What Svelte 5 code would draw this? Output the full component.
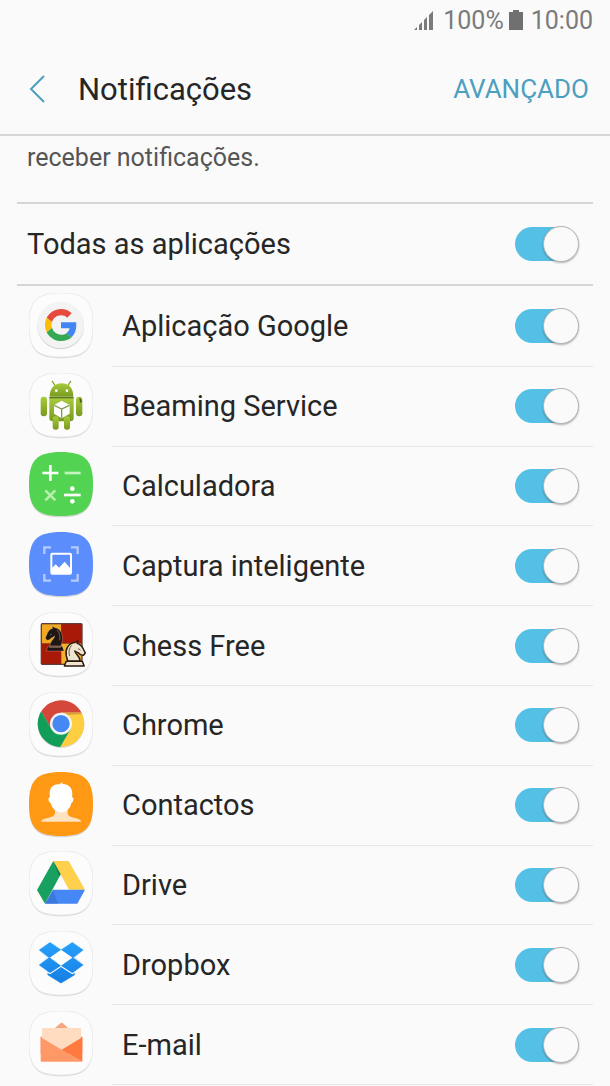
<script>
    let apps = [
        {id: "google", name: "Aplicação Google", on: true},
        {id: "beaming", name: "Beaming Service", on: true},
        {id: "calc", name: "Calculadora", on: true, color: "#52d452"},
        {id: "capture", name: "Captura inteligente", on: true, color: "#5c8dfd"},
        {id: "chess", name: "Chess Free", on: true},
        {id: "chrome", name: "Chrome", on: true},
        {id: "contacts", name: "Contactos", on: true, color: "#ff9914"},
        {id: "drive", name: "Drive", on: true},
        {id: "dropbox", name: "Dropbox", on: true},
        {id: "email", name: "E-mail", on: true}
    ]

    const tile = "M96 0C168 0 192 24 192 96S168 192 96 192 0 168 0 96 24 0 96 0z"
    const knight = "M23 7L21 0L30 5C47 8 55 24 52 44L48 60H15C14 46 27 41 29 30C23 35 18 35 14 41L6 43L1 36L5 27C8 18 13 10 23 7zM9 61H52L57 75H4z"

    $: all_on = apps.every(app => app.on)

    function toggle_all() {
        const value = !all_on
        apps = apps.map(app => ({...app, on: value}))
    }
</script>

<main>
    <div class="status">
        <svg width="22" height="22" viewBox="0 0 22 22" fill="#7b7b7b">
            <path d="M1 21l3-3v3zM6 21v-5l3-3v8zM11 21v-10l3-3v13zM16 21V6l4-4v19z" />
        </svg>
        <span>100%</span>
        <svg class="battery" width="14" height="22" viewBox="0 0 14 22" fill="#707070">
            <path d="M4 1h6v2h4v18H0V3h4z" />
        </svg>
        <span>10:00</span>
    </div>

    <header>
        <button class="back" aria-label="Voltar">
            <svg width="18" height="28" viewBox="0 0 18 28" fill="none" stroke="#4c9fbe" stroke-width="2">
                <path d="M16 1L3 14l13 13" />
            </svg>
        </button>
        <h1>Notificações</h1>
        <button class="advanced">AVANÇADO</button>
    </header>

    <p class="hint">receber notificações.</p>

    <div class="all">
        <label for="all">Todas as aplicações</label>
        <input id="all" type="checkbox" checked={all_on} on:change={toggle_all}>
    </div>

    <ul>
        {#each apps as app}
            <li>
                <svg class="icon" viewBox="0 0 192 198">
                    <path d={tile} fill="#d6d6d6" transform="translate(0 4)" />
                    <path d={tile} fill={app.color ?? "#fcfcfc"} stroke={app.color ? "none" : "#ebebeb"} stroke-width="3" />
                    {#if app.id === "google"}
                        <circle cx="95" cy="99" r="70" fill="#cfcfcf" />
                        <circle cx="95" cy="96" r="70" fill="#f3f3f3" />
                        <g transform="translate(48 48) scale(2)">
                            <path fill="#e64a3c" d="M24 9.500c3.540 0 6.710 1.220 9.210 3.600l6.850-6.850C35.900 2.380 30.470 0 24 0 14.620 0 6.510 5.380 2.560 13.220l7.980 6.190C12.430 13.720 17.740 9.500 24 9.500z" />
                            <path fill="#4285f4" d="M46.980 24.550c0-1.570-.15-3.090-.38-4.550H24v9.020h12.940c-.58 2.960-2.260 5.480-4.780 7.180l7.730 6c4.510-4.180 7.090-10.360 7.090-17.650z" />
                            <path fill="#fbbc05" d="M10.530 28.590c-.48-1.450-.76-2.990-.76-4.590s.27-3.140.76-4.590l-7.980-6.190C.92 16.460 0 20.120 0 24s.92 7.540 2.560 10.780l7.970-6.190z" />
                            <path fill="#34a853" d="M24 48c6.480 0 11.930-2.130 15.890-5.810l-7.730-6c-2.150 1.450-4.920 2.300-8.160 2.300-6.260 0-11.570-4.220-13.470-9.910l-7.980 6.190C6.510 42.620 14.620 48 24 48z" />
                        </g>
                    {:else if app.id === "beaming"}
                        <defs>
                            <linearGradient id="robot" x1="0" y1="0" x2="0" y2="1">
                                <stop offset="0" stop-color="#a9cb3c" />
                                <stop offset="1" stop-color="#77991f" />
                            </linearGradient>
                        </defs>
                        <path d="M70 25l9 14M125 25l-9 14" stroke="#8aa62b" stroke-width="4" stroke-linecap="round" />
                        <g fill="url(#robot)">
                            <path d="M62 71C62 46 76 31 98 31S133 46 133 71z" />
                            <path d="M61 75h73v60q0 10-10 10H71q-10 0-10-10z" />
                            <rect x="35" y="71" width="19" height="59" rx="9" />
                            <rect x="141" y="71" width="19" height="59" rx="9" />
                            <rect x="71" y="130" width="18" height="40" rx="8" />
                            <rect x="105" y="130" width="18" height="40" rx="8" />
                        </g>
                        <path d="M61 74h73" stroke="#5c7620" stroke-width="4" />
                        <path d="M151 74q9 3 7 14l-5 1z" fill="#4c601f" />
                        <circle cx="82" cy="53" r="4" fill="#fff" />
                        <circle cx="114" cy="53" r="4" fill="#fff" />
                        <path d="M98 83l24 13v26l-24 14-23-14V96z" fill="#fff" />
                        <path d="M76 97l22 11 23-11M98 108v26" stroke="#7f9b50" stroke-width="4" fill="none" />
                    {:else if app.id === "calc"}
                        <g stroke="#fff" fill="none" stroke-width="8">
                            <path d="M40 63h48M64 39v48" />
                            <path d="M107 63h48" stroke="#c4f3bf" />
                            <path d="M49 115l30 30M79 115l-30 30" stroke="#b5efad" />
                            <path d="M105 129h50" />
                        </g>
                        <circle cx="130" cy="110" r="7" fill="#fff" />
                        <circle cx="130" cy="148" r="7" fill="#fff" />
                    {:else if app.id === "capture"}
                        <path d="M46 66V46h20M126 46h20v20M146 126v20h-20M66 146H46v-20" stroke="#b6caff" stroke-width="7" fill="none" />
                        <rect x="67" y="65" width="59" height="60" rx="3" stroke="#fff" stroke-width="6" fill="none" />
                        <path d="M67 110l13-13 10 10 17-18 19 22v14H67z" fill="#fff" />
                    {:else if app.id === "chess"}
                        <rect x="35" y="33" width="126" height="126" rx="5" fill="#5d4038" />
                        <path d="M39 37h57v57H39z" fill="#f4a81f" />
                        <path d="M97 37h60v57H97zM39 95h57v60H39z" fill="#a91908" />
                        <path d="M97 95h60v60H97z" fill="#f3b22d" />
                        <g transform="translate(48 42)">
                            <path d={knight} fill="#1f1512" stroke="#e9c6a0" stroke-width="1" />
                            <path d="M12 64h36M15 27l5-3M36 12c8 7 10 19 8 31" stroke="#a48b7b" stroke-width="2" fill="none" />
                        </g>
                        <g transform="translate(170 87) scale(-1.120 1)">
                            <path d={knight} fill="#efe5ce" stroke="#29180f" stroke-width="4" stroke-linejoin="round" />
                            <path d="M9 61h43M14 27l6-4M37 13c8 8 9 20 6 32" stroke="#29180f" stroke-width="2" fill="none" />
                        </g>
                    {:else if app.id === "chrome"}
                        <circle cx="96" cy="98" r="70" fill="#dadada" />
                        <path d="M36.600 58A70 70 0 0 1 157.700 62H96L67.400 111.500z" fill="#d5473a" />
                        <path d="M157.700 62A70 70 0 0 1 93.700 164.900L124.600 111.500 96 62z" fill="#fecd40" />
                        <path d="M93.700 164.900A70 70 0 0 1 36.600 58L67.400 111.500H124.600z" fill="#129d58" />
                        <path d="M96 62h61l1 5-58 3z" fill="#dca33a" />
                        <circle cx="96" cy="95" r="33" fill="#f4f4f4" />
                        <circle cx="96" cy="95" r="26" fill="#4688f2" />
                    {:else if app.id === "contacts"}
                        <path d="M36 149C40 134 78 141 78 122V103h38v19c0 19 37 12 41 27z" fill="#ffe2c0" />
                        <path d="M63 76C58 50 70 36 91 37L101 30 100 36C124 37 133 52 129 76C136 75 134 91 127 93C124 111 110 121 97 121S69 111 65 93C57 91 56 76 63 76z" fill="#fff" />
                    {:else if app.id === "drive"}
                        <g transform="translate(-27 -20)">
                            <path d="M100 50l22 40-47 88-24-41z" fill="#18a05e" />
                            <path d="M100 50h46l49 86h-48z" fill="#ffd04b" />
                            <path d="M99 136h96l-23 42H75z" fill="#4587f4" />
                            <path d="M99 136l15 42H75z" fill="#3569c9" opacity="0.5" />
                            <path d="M100 50l22 40-4 6z" fill="#0f7d48" />
                        </g>
                    {:else if app.id === "dropbox"}
                        <defs>
                            <linearGradient id="box" x1="0" y1="0" x2="0" y2="1">
                                <stop offset="0" stop-color="#27a0fb" />
                                <stop offset="1" stop-color="#157ee2" />
                            </linearGradient>
                        </defs>
                        <g transform="translate(-27 -18)">
                            <path d="M90 52l33 23 34-23 33 23-26 22 26 23-26 19v11l-41 25-40-25v-11l-26-19 26-23-26-22z" fill="#fff" stroke="#c9e5fb" stroke-width="3" />
                            <path d="M90 52l33 22-35 25-31-24zM157 52l-34 22 36 25 31-24zM88 97l35 25-33 22-33-24zM159 97l-36 25 34 22 33-24zM83 144l7 4 33-22 34 22 7-4v6l-41 25-40-25z" fill="url(#box)" />
                        </g>
                    {:else}
                        <g transform="translate(-27 -256)">
                            <path d="M102 309l20-17q3-2 6 0l19 17z" fill="#f6a681" />
                            <path d="M62 334l5-3h115l5 3v50H62z" fill="#ff8b56" />
                            <path d="M66 311q0-4 4-4h109q4 0 4 4v40l-58 32-59-32z" fill="#ffdcc0" />
                            <path d="M62 335l63 37 62 36H65q-3 0-3-3z" fill="#ff9867" />
                            <path d="M187 335l-62 37 62 36z" fill="#ff7a3e" />
                        </g>
                    {/if}
                </svg>
                <div class="row">
                    <label for={app.id}>{app.name}</label>
                    <input id={app.id} type="checkbox" bind:checked={app.on}>
                </div>
            </li>
        {/each}
    </ul>
</main>

<style>
:global(body) {
    background-color: #fafafa;
}

main {
    display: flex;
    flex-direction: column;
    box-sizing: border-box;
    min-height: 100vh;
    padding-bottom: 1px;

    font-family: Roboto, sans-serif;
    font-size: 29px;
    color: #262626;
}

.status {
    display: flex;
    align-items: center;
    justify-content: flex-end;
    height: 40px;
    padding-right: 17px;

    font-size: 25px;
    color: #7b7b7b;
}

.status span {
    margin-left: 8px;
}

.battery {
    margin-left: 5px;
}

header {
    display: flex;
    align-items: center;
    height: 90px;
    padding: 4px 21px 0 28px;
    border-bottom: 2px solid #d6d6d6;
}

button {
    padding: 0;
    border: none;
    background: none;
    font: inherit;
    cursor: pointer;
}

.back {
    display: flex;
    width: 50px;
}

h1 {
    flex: 1;
    margin: 0;
    font-size: 31px;
    font-weight: 400;
}

.advanced {
    font-size: 26px;
    color: #4c9fbe;
}

.hint {
    height: 66px;
    margin: 0 17px;
    padding-left: 10px;
    border-bottom: 2px solid #d6d6d6;

    font-size: 25px;
    line-height: 44px;
    color: #555;
}

.all {
    display: flex;
    align-items: center;
    justify-content: space-between;
    height: 80px;
    margin: 0 17px;
    padding: 0 14px 0 10px;
    border-bottom: 2px solid #d6d6d6;
}

ul {
    display: flex;
    flex: 1;
    flex-direction: column;
    margin: 0 17px;
    padding: 1px 0 0;
    list-style: none;
}

li {
    display: flex;
    flex: 1;
    align-items: center;
    min-height: 78px;
    padding-left: 12px;
}

.icon {
    width: 64px;
    height: 66px;
    margin-bottom: 2px;
}

.row {
    display: flex;
    flex: 1;
    align-items: center;
    align-self: stretch;
    justify-content: space-between;
    margin-left: 19px;
    padding: 0 14px 0 10px;
    border-bottom: 1px solid #e6e6e6;
}

input {
    position: relative;
    appearance: none;
    width: 64px;
    height: 34px;
    margin: 0;
    border-radius: 17px;
    background: linear-gradient(to right, #bbb 48px, transparent 48px);
    cursor: pointer;
}

input:checked {
    background: linear-gradient(to right, #55c0e6 48px, transparent 48px);
}

input::after {
    content: "";
    position: absolute;
    top: -1px;
    left: 0;
    box-sizing: border-box;
    width: 36px;
    height: 36px;
    border: 1px solid #b4b4b4;
    border-radius: 50%;
    background-color: #fafafa;
    box-shadow: 0 1px 2px rgba(0, 0, 0, 0.3);
}

input:checked::after {
    left: 28px;
}
</style>
